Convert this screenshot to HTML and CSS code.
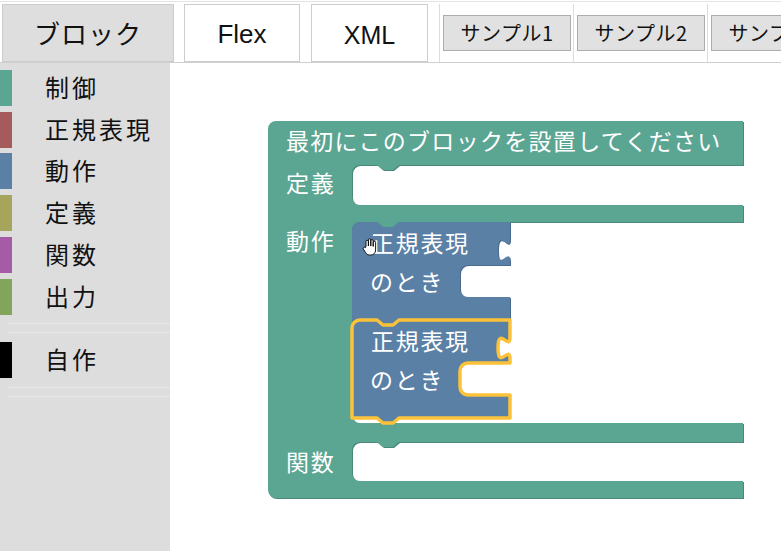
FILE: index.html
```html
<!DOCTYPE html>
<html lang="ja">
<head>
<meta charset="utf-8">
<title>Blocks</title>
<link rel="stylesheet" href="styles.css">
</head>
<body>
<div class="app">
  <header class="topbar">
    <div class="tab tab-block active">ブロック</div>
    <div class="tab tab-flex">Flex</div>
    <div class="tab tab-xml">XML</div>
    <div class="samples">
      <div class="cell"><button class="sample">サンプル1</button></div>
      <div class="cell"><button class="sample">サンプル2</button></div>
      <div class="cell"><button class="sample">サンプル3</button></div>
    </div>
  </header>
  <div class="main">
    <nav class="toolbox">
      <div class="row"><span class="swatch c-control"></span><span class="label">制御</span></div>
      <div class="row"><span class="swatch c-regex"></span><span class="label">正規表現</span></div>
      <div class="row"><span class="swatch c-action"></span><span class="label">動作</span></div>
      <div class="row"><span class="swatch c-define"></span><span class="label">定義</span></div>
      <div class="row"><span class="swatch c-func"></span><span class="label">関数</span></div>
      <div class="row"><span class="swatch c-output"></span><span class="label">出力</span></div>
      <div class="sep"></div>
      <div class="row row-custom"><span class="swatch c-custom"></span><span class="label">自作</span></div>
      <div class="sep"></div>
    </nav>
    <div class="canvas">
      <svg class="workspace" width="611" height="488" viewBox="170 63 611 488" xmlns="http://www.w3.org/2000/svg">
        <!-- main block -->
        <path class="teal-dark" transform="translate(1,1)" d="M268,129 a8,8 0 0 1 8,-8 H743 V165 H399 l-6,5 h-10 l-6,-5 H360 a8,8 0 0 0 -8,8 V197 a8,8 0 0 0 8,8 H743 V222 H399 l-6,5 h-10 l-6,-5 H360 a8,8 0 0 0 -8,8 V415 a8,8 0 0 0 8,8 H743 V442 H399 l-6,5 h-10 l-6,-5 H360 a8,8 0 0 0 -8,8 V473 a8,8 0 0 0 8,8 H743 V498 H276 a8,8 0 0 1 -8,-8 Z"/>
        <path class="teal" d="M268,129 a8,8 0 0 1 8,-8 H743 V165 H399 l-6,5 h-10 l-6,-5 H360 a8,8 0 0 0 -8,8 V197 a8,8 0 0 0 8,8 H743 V222 H399 l-6,5 h-10 l-6,-5 H360 a8,8 0 0 0 -8,8 V415 a8,8 0 0 0 8,8 H743 V442 H399 l-6,5 h-10 l-6,-5 H360 a8,8 0 0 0 -8,8 V473 a8,8 0 0 0 8,8 H743 V498 H276 a8,8 0 0 1 -8,-8 Z"/>
        <text class="btxt" x="286" y="150" textLength="436" lengthAdjust="spacing">最初にこのブロックを設置してください</text>
        <text class="btxt" x="286" y="192">定義</text>
        <text class="btxt" x="286" y="250">動作</text>
        <text class="btxt" x="286" y="471">関数</text>

        <!-- blue block 1 -->
        <path class="blue-dark" transform="translate(1,1)" d="M352,230 a8,8 0 0 1 8,-8 H377 l6,5 h10 l6,-5 H510 V239 c0,15 -12,-12 -12,11 s12,-4 12,11 V265 H468 a8,8 0 0 0 -8,8 V289 a8,8 0 0 0 8,8 H510 V320 H399 l-6,5 h-10 l-6,-5 H352 Z"/>
        <path class="blue" d="M352,230 a8,8 0 0 1 8,-8 H377 l6,5 h10 l6,-5 H510 V239 c0,15 -12,-12 -12,11 s12,-4 12,11 V265 H468 a8,8 0 0 0 -8,8 V289 a8,8 0 0 0 8,8 H510 V320 H399 l-6,5 h-10 l-6,-5 H352 Z"/>
        <text class="btxt" x="371" y="252">正規表現</text>
        <text class="btxt" x="370" y="291">のとき</text>

        <!-- blue block 2 (selected) -->
        <g transform="translate(0,98)">
          <path class="blue sel" d="M352,230 a8,8 0 0 1 8,-8 H377 l6,5 h10 l6,-5 H510 V239 c0,15 -12,-12 -12,11 s12,-4 12,11 V265 H468 a8,8 0 0 0 -8,8 V289 a8,8 0 0 0 8,8 H510 V320 H399 l-6,5 h-10 l-6,-5 H352 Z"/>
          <text class="btxt" x="371" y="252">正規表現</text>
          <text class="btxt" x="370" y="291">のとき</text>
        </g>

        <!-- hand cursor -->
        <g transform="translate(362,238)">
          <path class="hand" d="M4,9 V3.5 a1.2,1.2 0 0 1 2.4,0 V8 V2 a1.2,1.2 0 0 1 2.4,0 V8 V2.8 a1.2,1.2 0 0 1 2.4,0 V8.5 V4.5 a1.2,1.2 0 0 1 2.4,0 V12 c0,3 -2,5 -5,5 h-1 c-2,0 -3,-1 -4,-2.5 L1.3,11 a1.2,1.2 0 0 1 2,-1.3 Z"/>
        </g>
      </svg>
    </div>
  </div>
</div>
</body>
</html>
```

FILE: styles.css
```css
* { box-sizing: border-box; }

html, body {
  margin: 0;
  padding: 0;
  background: #fff;
  overflow: hidden;
}

body {
  font-family: "Noto Sans CJK JP", "Noto Sans", sans-serif;
  color: #111;
}

.app {
  width: 781px;
  height: 551px;
  display: flex;
  flex-direction: column;
}

.topbar {
  margin-top: 1px;
  height: 62px;
  border-top: 1px solid #e4e4e4;
  border-bottom: 1px solid #cfcfcf;
  padding-top: 2px;
  display: flex;
  align-items: flex-start;
  flex: none;
  overflow: hidden;
}

.tab {
  height: 58px;
  border: 1px solid #cdcdcd;
  background: #fff;
  display: flex;
  align-items: center;
  justify-content: center;
  flex: none;
  font-family: "Liberation Sans", Arial, sans-serif;
  font-size: 25px;
  color: #111;
}

.tab-block {
  margin-left: 2px;
  width: 172px;
  background: #dedede;
  font-family: "Noto Sans CJK JP", sans-serif;
  font-size: 26px;
  letter-spacing: 1px;
  padding-bottom: 2px;
}

.tab-flex {
  margin-left: 10px;
  width: 116px;
  padding-top: 2px;
  font-size: 26px;
}

.tab-xml {
  margin-left: 11px;
  width: 117px;
  padding-top: 4px;
}

.samples {
  margin-left: 11px;
  display: flex;
  flex: none;
}

.cell {
  width: 134px;
  height: 58px;
  border-left: 1px solid #dcdcdc;
  padding: 11px 2px 0 3px;
  flex: none;
}

.sample {
  width: 128px;
  height: 36px;
  margin: 0;
  padding: 0 0 2px 0;
  background: #e1e1e1;
  border: 1px solid #adadad;
  font-family: "Noto Sans CJK JP", sans-serif;
  font-size: 20px;
  letter-spacing: 0.5px;
  color: #111;
  white-space: nowrap;
  overflow: hidden;
}

.main {
  flex: 1;
  display: flex;
  min-height: 0;
}

.toolbox {
  width: 170px;
  flex: none;
  background: #dddddd;
  padding-top: 4px;
}

.row {
  height: 41.8px;
  display: flex;
  align-items: center;
}

.row-custom {
  margin-top: 6px;
  height: 42px;
}

.swatch {
  width: 12px;
  height: 36px;
  flex: none;
}

.label {
  margin-left: 33px;
  font-size: 24px;
  letter-spacing: 3px;
  line-height: 1;
  color: #111;
  padding-bottom: 2px;
}

.c-control { background: #5ba593; }
.c-regex { background: #a55b5b; }
.c-action { background: #5b80a5; }
.c-define { background: #a5a55b; }
.c-func { background: #a55ba5; }
.c-output { background: #80a55b; }
.c-custom { background: #000; }

.sep {
  margin: 5px 0 0 8px;
  height: 10px;
  border-top: 1px solid #e9e9e9;
  border-bottom: 1px solid #e9e9e9;
}

.sep:last-child {
  margin-top: 6px;
}

.canvas {
  flex: 1;
  position: relative;
  background: #fff;
}

.workspace {
  position: absolute;
  left: 0;
  top: 0;
  display: block;
}

.teal { fill: #5ba593; }
.teal-dark { fill: #4a8879; }
.blue { fill: #5b80a5; }
.blue-dark { fill: #4a6a8b; }
.sel {
  stroke: #fcc23a;
  stroke-width: 3.5px;
  stroke-linejoin: round;
}

.btxt {
  fill: #fff;
  font-family: "Noto Sans CJK JP", sans-serif;
  font-size: 23px;
  letter-spacing: 1.7px;
}

.hand {
  fill: #fff;
  stroke: #000;
  stroke-width: 0.9px;
  stroke-linejoin: round;
}
```
